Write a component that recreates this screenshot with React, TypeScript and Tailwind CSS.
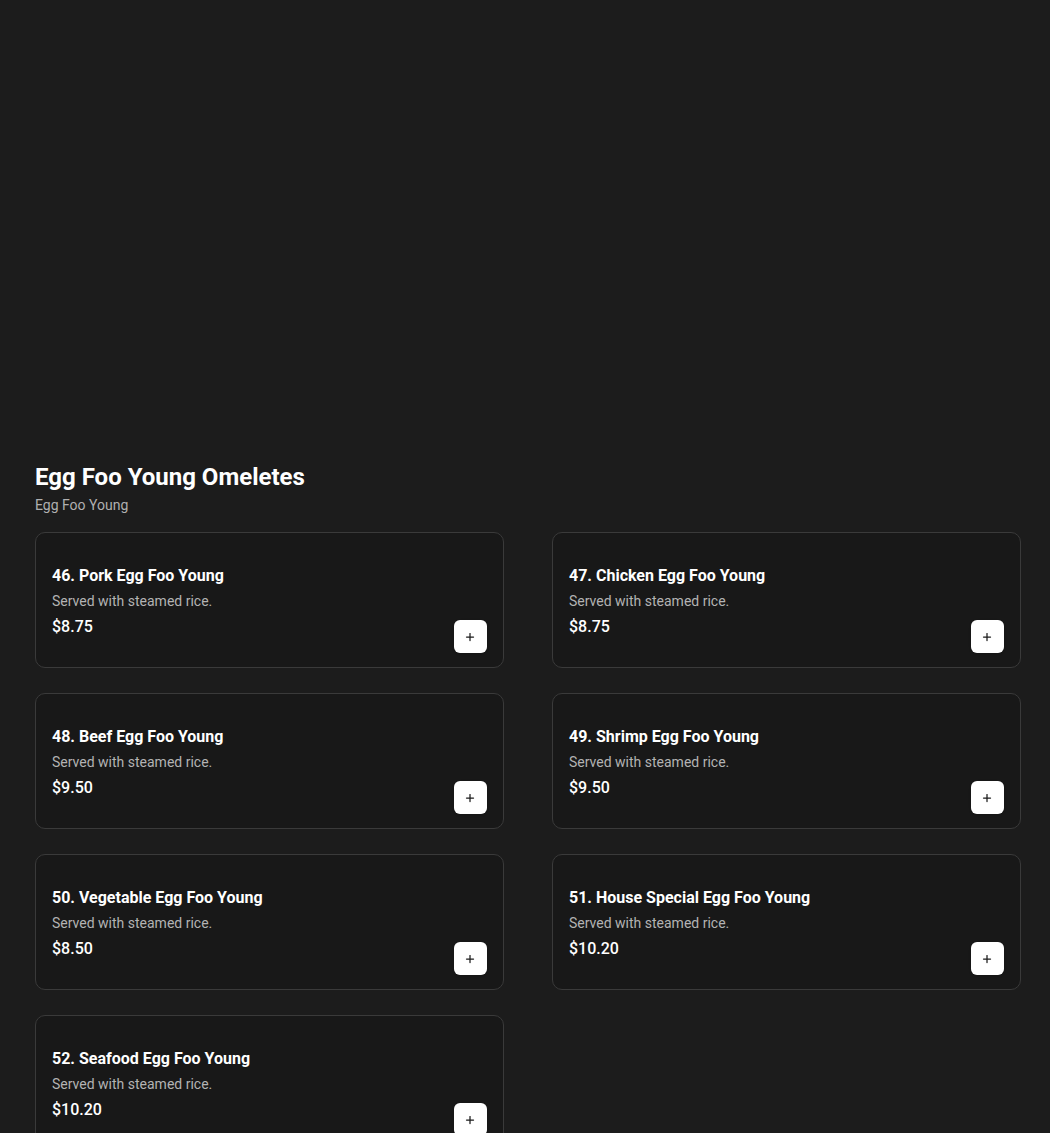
import { Plus } from "lucide-react";

const ITEMS = [
  { name: "46. Pork Egg Foo Young", price: "$8.75" },
  { name: "47. Chicken Egg Foo Young", price: "$8.75" },
  { name: "48. Beef Egg Foo Young", price: "$9.50" },
  { name: "49. Shrimp Egg Foo Young", price: "$9.50" },
  { name: "50. Vegetable Egg Foo Young", price: "$8.50" },
  { name: "51. House Special Egg Foo Young", price: "$10.20" },
  { name: "52. Seafood Egg Foo Young", price: "$10.20" },
];

function ItemCard({ name, price }: { name: string; price: string }) {
  return (
    <div className="flex h-[136px] items-end justify-between rounded-[10px] border border-[#3a3a3a] bg-[#181818] px-4 pb-[14px] pt-[30px]">
      <div className="flex flex-col pb-[14px]">
        <h3 className="text-base font-bold leading-6 text-white">{name}</h3>
        <p className="mt-[3px] text-sm leading-5 text-[#b3b3b3]">Served with steamed rice.</p>
        <p className="mt-1 text-base font-medium leading-6 text-white">{price}</p>
      </div>
      <button className="grid h-[33px] w-[33px] place-items-center rounded-md bg-white text-[#1a1a1a] shadow-sm">
        <Plus className="h-3 w-3" strokeWidth={2.5} />
      </button>
    </div>
  );
}

export default function App() {
  return (
    <div className="min-h-screen bg-[#1c1c1c] font-['Roboto',sans-serif]">
      <div className="h-[461px]" />
      <section className="pl-[35px] pr-[29px]">
        <h2 className="text-2xl font-bold leading-8 text-white">Egg Foo Young Omeletes</h2>
        <p className="mt-[2px] text-sm leading-5 text-[#b0b0b0]">Egg Foo Young</p>
        <div className="mt-[17px] grid grid-cols-[468.5px_468.5px] gap-x-[48.5px] gap-y-[25px]">
          {ITEMS.map((it) => (
            <ItemCard key={it.name} name={it.name} price={it.price} />
          ))}
        </div>
      </section>
    </div>
  );
}
